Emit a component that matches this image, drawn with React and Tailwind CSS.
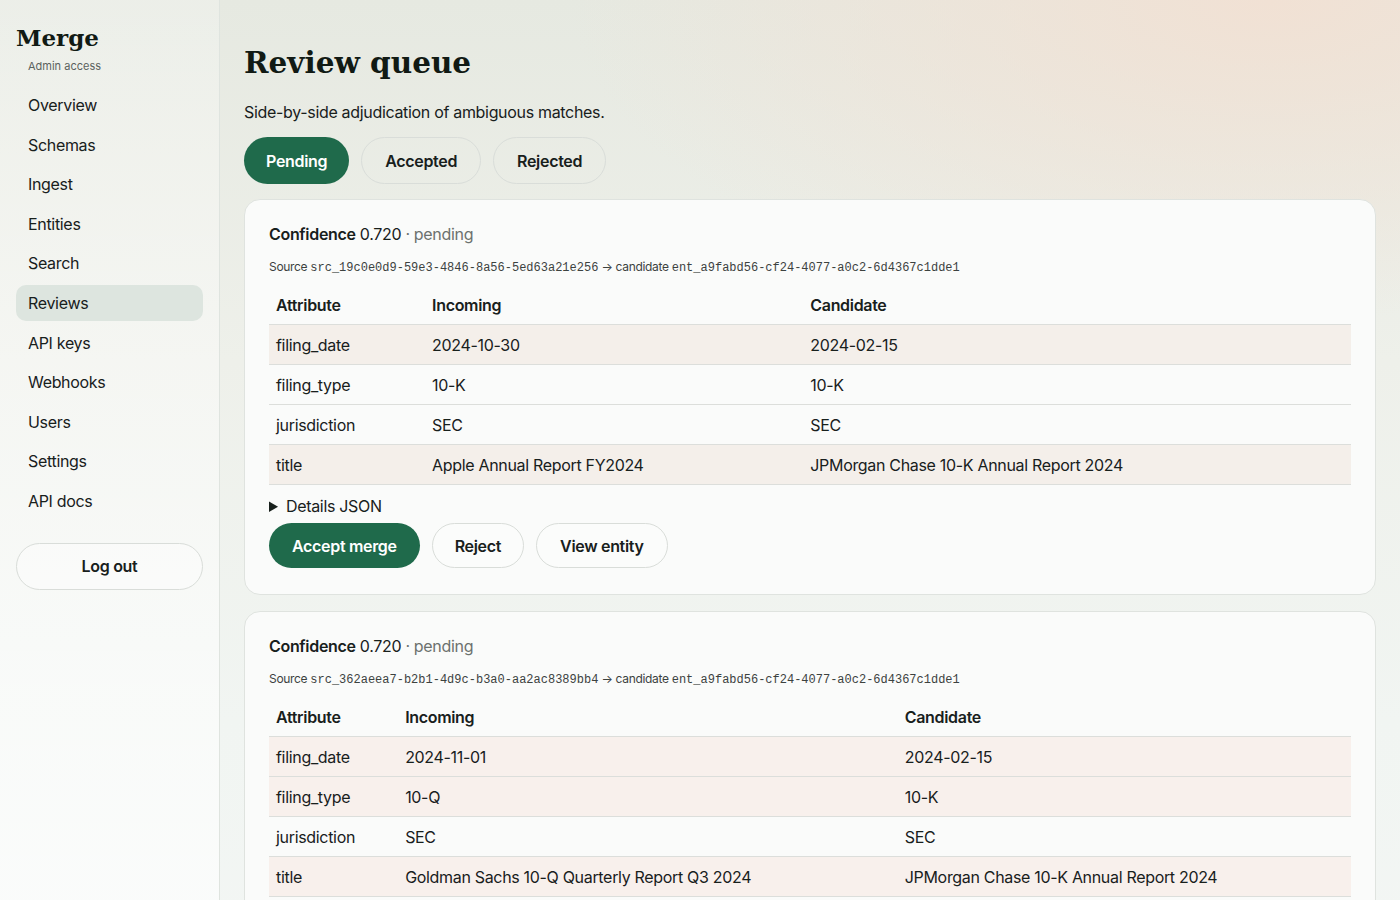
import React from 'react';

const navItems = ['Overview', 'Schemas', 'Ingest', 'Entities', 'Search', 'Reviews', 'API keys', 'Webhooks', 'Users', 'Settings', 'API docs'];

const reviews = [
  {
    source: 'src_19c0e0d9-59e3-4846-8a56-5ed63a21e256',
    candidate: 'ent_a9fabd56-cf24-4077-a0c2-6d4367c1dde1',
    tint: 'bg-[#f4efea]',
    rows: [
      { attr: 'filing_date', incoming: '2024-10-30', candidate: '2024-02-15', diff: true },
      { attr: 'filing_type', incoming: '10-K', candidate: '10-K', diff: false },
      { attr: 'jurisdiction', incoming: 'SEC', candidate: 'SEC', diff: false },
      { attr: 'title', incoming: 'Apple Annual Report FY2024', candidate: 'JPMorgan Chase 10-K Annual Report 2024', diff: true },
    ],
  },
  {
    source: 'src_362aeea7-b2b1-4d9c-b3a0-aa2ac8389bb4',
    candidate: 'ent_a9fabd56-cf24-4077-a0c2-6d4367c1dde1',
    tint: 'bg-[#f8f0ec]',
    rows: [
      { attr: 'filing_date', incoming: '2024-11-01', candidate: '2024-02-15', diff: true },
      { attr: 'filing_type', incoming: '10-Q', candidate: '10-K', diff: true },
      { attr: 'jurisdiction', incoming: 'SEC', candidate: 'SEC', diff: false },
      { attr: 'title', incoming: 'Goldman Sachs 10-Q Quarterly Report Q3 2024', candidate: 'JPMorgan Chase 10-K Annual Report 2024', diff: true },
    ],
  },
];

const serif = "font-['DejaVu_Serif',Georgia,serif] tracking-normal";
const mono = "font-['Liberation_Mono',monospace] tracking-normal";

const ReviewCard = ({ review }) => (
  <div className="rounded-2xl border border-[#dfe3df] bg-[#fafbfa] px-6 pt-[22px] pb-[26px]">
    <p className="text-base leading-6">
      <span className="font-semibold">Confidence</span> 0.720 <span className="text-[#6c716e]">· pending</span>
    </p>
    <p className="mt-[12px] text-xs leading-[18px] text-[#3c423f]">
      Source <span className={mono}>{review.source}</span> → candidate{' '}
      <span className={mono}>{review.candidate}</span>
    </p>
    <table className="mt-[8px] w-full border-collapse text-left text-base">
      <thead>
        <tr className="border-b border-[#dcdedb]">
          <th className="px-[7px] py-[7.5px] font-semibold leading-6">Attribute</th>
          <th className="px-[7px] py-[7.5px] font-semibold leading-6">Incoming</th>
          <th className="px-[7px] py-[7.5px] font-semibold leading-6">Candidate</th>
        </tr>
      </thead>
      <tbody>
        {review.rows.map((row) => (
          <tr key={row.attr} className={`border-b border-[#dcdedb] ${row.diff ? review.tint : ''}`}>
            <td className="px-[7px] py-[7.5px] leading-6">{row.attr}</td>
            <td className="px-[7px] py-[7.5px] leading-6">{row.incoming}</td>
            <td className="px-[7px] py-[7.5px] leading-6">{row.candidate}</td>
          </tr>
        ))}
      </tbody>
    </table>
    <details className="mt-[9px]">
      <summary className="cursor-pointer text-base leading-6">Details JSON</summary>
    </details>
    <div className="mt-[5px] flex gap-3">
      <button className="h-[45px] rounded-full bg-[#1f6a4b] px-[23px] text-base font-semibold text-white">Accept merge</button>
      <button className="h-[45px] rounded-full border border-[#d9ddd9] bg-[#fbfcfb] px-[22px] text-base font-semibold">Reject</button>
      <button className="h-[45px] rounded-full border border-[#d9ddd9] bg-[#fbfcfb] px-[23px] text-base font-semibold">View entity</button>
    </div>
  </div>
);

export default function App() {
  return (
    <div className="flex min-h-screen bg-[radial-gradient(ellipse_700px_320px_at_1270px_0px,#f1e1d4_0%,rgba(241,225,212,0)_100%),linear-gradient(180deg,#e6e9e1_0%,#eef0ea_35%,#f1f5f2_70%,#f3f6f4_100%)] font-['Inter',sans-serif] tracking-[-0.02em] text-[#18201c]">
      {/* Sidebar */}
      <aside className="w-[220px] shrink-0 border-r border-[#dfe4df] bg-[linear-gradient(180deg,rgba(255,255,255,0.25)_0%,rgba(255,255,255,0.7)_100%)] px-4 pt-[22px]">
        <div className={`${serif} text-[23px] font-bold leading-8 text-[#111a14]`}>Merge</div>
        <div className="mt-[4px] pl-3 text-[11px] leading-4 tracking-normal text-[#5b625e]">Admin access</div>
        <nav className="mt-[13px] flex flex-col gap-[3.6px]">
          {navItems.map((item) => (
            <div
              key={item}
              className={`rounded-[10px] px-3 py-[6px] text-base leading-6 ${item === 'Reviews' ? 'bg-[#dde5df]' : ''}`}
            >
              {item}
            </div>
          ))}
        </nav>
        <button className="mt-[24px] h-[47px] w-full rounded-full border border-[#d9ddd9] bg-[#fbfcfb]/60 text-base font-semibold">
          Log out
        </button>
      </aside>

      {/* Main */}
      <main className="flex-1 px-6 pt-[43px]">
        <h1 className={`${serif} text-[29.5px] font-bold leading-10 text-[#111a14]`}>Review queue</h1>
        <p className="mt-[17px] text-base leading-6">Side-by-side adjudication of ambiguous matches.</p>
        <div className="mt-[13px] flex gap-3">
          <button className="h-[47px] rounded-full bg-[#1f6a4b] px-[22px] text-base font-semibold text-white">Pending</button>
          <button className="h-[47px] rounded-full border border-[#d9ddd9] px-[23px] text-base font-semibold">Accepted</button>
          <button className="h-[47px] rounded-full border border-[#d9ddd9] px-[23px] text-base font-semibold">Rejected</button>
        </div>
        <div className="mt-[15px] flex flex-col gap-4 pb-6">
          {reviews.map((review) => (
            <ReviewCard key={review.source} review={review} />
          ))}
        </div>
      </main>
    </div>
  );
}
